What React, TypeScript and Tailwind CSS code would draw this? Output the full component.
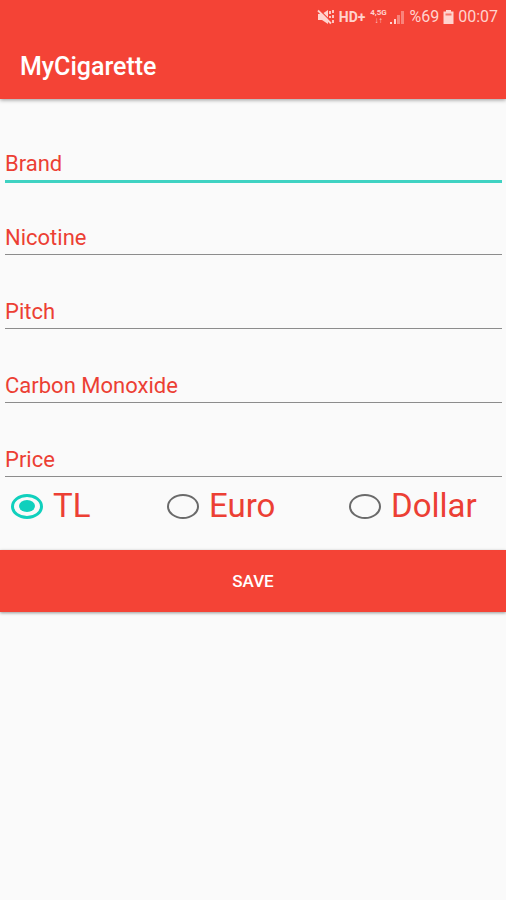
import { useState } from "react";

const fields = ["Brand", "Nicotine", "Pitch", "Carbon Monoxide", "Price"];
const currencies = ["TL", "Euro", "Dollar"];

function MutedIcon() {
  return (
    <svg viewBox="0 0 18 16" className="h-4 w-[18px]" fill="currentColor" aria-hidden="true">
      <path d="M1 5h4l6-4v14l-6-4H1z" />
      <path d="M2.500 1 15 13.500" stroke="#f44336" strokeWidth="1.200" />
      <path d="M1 1.500 14 14.500" stroke="currentColor" strokeWidth="1.800" />
      <path d="M13 2v3M16 1v3M13 7v2M16 6v3M16 11v3" stroke="currentColor" strokeWidth="1.800" fill="none" />
    </svg>
  );
}

function SignalIcon() {
  return (
    <svg viewBox="0 0 16 16" className="h-4 w-4" fill="currentColor" aria-hidden="true">
      <path d="M1 13h2v2H1zM5 10h2v5H5z" />
      <path d="M8 6h3v9H8zM12 2h3v13h-3z" opacity=".45" />
    </svg>
  );
}

function BatteryIcon() {
  return (
    <svg viewBox="0 0 11 16" className="h-4 w-[11px]" fill="currentColor" aria-hidden="true">
      <path d="M3 1h5v1.500h2.500V15H.5V2.500H3z" />
      <path d="M2.500 4.500h6v2h-6z" fill="#f44336" opacity=".65" />
    </svg>
  );
}

export default function App() {
  const [currency, setCurrency] = useState("TL");

  return (
    <div className="min-h-screen bg-[#fafafa] font-[Roboto,sans-serif]">
      <header className="relative bg-[#f44336] text-white shadow-[0_1px_4px_rgba(0,0,0,0.4)]">
        <div className="flex h-[34px] items-center justify-end pr-2 text-[#ffd3ce]">
          <MutedIcon />
          <span className="ml-1 text-[14px] font-bold">HD+</span>
          <span className="ml-1 flex w-[18px] flex-col items-center text-[8px] leading-[8px] font-bold">
            <span>4,5G</span>
            <span aria-hidden="true">↓↑</span>
          </span>
          <span className="ml-0.5"><SignalIcon /></span>
          <span className="ml-1 text-[16px]">%69</span>
          <span className="mx-1"><BatteryIcon /></span>
          <time className="text-[16px]">00:07</time>
        </div>
        <h1 className="flex h-[65px] items-center px-5 text-[25px] font-medium">MyCigarette</h1>
      </header>

      <form onSubmit={(e) => e.preventDefault()}>
        <div className="flex flex-col gap-10 pt-[51px] pr-1 pl-[5px]">
          {fields.map((name) => (
            <div key={name} className="h-[34px]">
              <input
                type="text"
                aria-label={name}
                placeholder={name}
                className={
                  "block w-full bg-transparent pb-0.5 text-[22px] leading-[28px] text-[#ec3f34] outline-none placeholder:text-[#ec3f34] " +
                  (name === "Brand" ? "border-b-[3px] border-[#3fd2c2]" : "border-b border-[#8c8c8c]")
                }
              />
            </div>
          ))}
        </div>

        <div
          role="radiogroup"
          aria-label="Currency"
          className="grid h-[52px] grid-cols-[156fr_182fr_157fr] items-center pl-[11px]"
        >
          {currencies.map((name) => (
            <label key={name} className="flex items-center gap-2.5 text-[33px] leading-[40px] text-[#ec3f34]">
              <input
                type="radio"
                name="currency"
                value={name}
                checked={currency === name}
                onChange={() => setCurrency(name)}
                className="grid h-[25px] w-8 shrink-0 appearance-none place-items-center rounded-[50%] border-2 border-[#6a6a6a] checked:border-[3px] checked:border-[#10d0bd] checked:before:h-3 checked:before:w-4 checked:before:rounded-[50%] checked:before:bg-[#10d0bd]"
              />
              {name}
            </label>
          ))}
        </div>

        <button
          type="submit"
          className="mt-[18px] h-[62px] w-full bg-[#f44336] pt-0.5 text-[17px] font-medium text-white shadow-[0_1px_3px_rgba(0,0,0,0.4)]"
        >
          SAVE
        </button>
      </form>
    </div>
  );
}
